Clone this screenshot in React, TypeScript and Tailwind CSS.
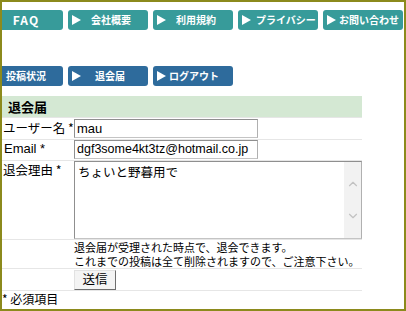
import React from "react";
import { ChevronUp, ChevronDown } from "lucide-react";

interface NavItem {
  label: string;
  arrow: boolean;
  gap: string;
}

const topNav: NavItem[] = [
  { label: "FAQ", arrow: false, gap: "" },
  { label: "会社概要", arrow: true, gap: "ml-[10px]" },
  { label: "利用規約", arrow: true, gap: "ml-[10px]" },
  { label: "プライバシー", arrow: true, gap: "ml-[5px]" },
  { label: "お問い合わせ", arrow: true, gap: "ml-[3px]" },
];

const userNav: NavItem[] = [
  { label: "投稿状況", arrow: false, gap: "" },
  { label: "退会届", arrow: true, gap: "ml-[14px]" },
  { label: "ログアウト", arrow: true, gap: "ml-[3px]" },
];

const Triangle = () => (
  <svg width="9" height="10" viewBox="0 0 9 10" className="shrink-0">
    <polygon points="0,0 9,5 0,10" fill="white" />
  </svg>
);

const NavButton: React.FC<{ item: NavItem; color: string }> = ({ item, color }) => (
  <div
    className={`w-[80px] h-[20px] shrink-0 rounded-[3px] flex items-center whitespace-nowrap overflow-hidden text-white font-bold text-[10px] leading-none ${color} ${
      item.arrow ? "pl-[4px]" : "justify-center pl-[6px]"
    }`}
  >
    {item.arrow && <Triangle />}
    <span className={`${item.gap} ${item.label === "FAQ" ? "tracking-[1px] text-[12px]" : ""}`}>{item.label}</span>
  </div>
);

const inputBox = "border border-[#8f8f8f] border-b-[#c4c4c4] border-r-[#b0b0b0]";

const App: React.FC = () => {
  const jp = "font-['Noto_Sans_CJK_JP',sans-serif]";
  return (
    <div className={`w-[406px] h-[311px] border-2 border-[#8c8a1c] bg-white overflow-hidden text-black ${jp}`}>
      <div className="flex gap-[5px] ml-[-19px] mt-[8px]">
        {topNav.map((n) => (
          <NavButton key={n.label} item={n} color="bg-[#379b9a]" />
        ))}
      </div>
      <div className="flex gap-[5px] ml-[-19px] mt-[36px]">
        {userNav.map((n) => (
          <NavButton key={n.label} item={n} color="bg-[#2e6b9c]" />
        ))}
      </div>

      <table className="mt-[10px] w-[360px] table-fixed border-collapse text-[12px] leading-none">
        <colgroup>
          <col className="w-[72px]" />
          <col className="w-[288px]" />
        </colgroup>
        <tbody>
          <tr>
            <td colSpan={2} className="h-[21px] bg-[#d4e8d3] pl-[6px] font-bold text-[13px] border-b border-[#e6e6e6]">
              退会届
            </td>
          </tr>
          <tr className="border-b border-[#e6e6e6]">
            <td className="h-[22px] pl-[1px] text-[12.5px] whitespace-nowrap">ユーザー名 *</td>
            <td>
              <div className={`w-[184px] h-[19px] ${inputBox} flex items-center pl-[2px] font-['Liberation_Sans',sans-serif] text-[13px]`}>
                mau
              </div>
            </td>
          </tr>
          <tr className="border-b border-[#e6e6e6]">
            <td className="h-[21px] pl-[2px] align-top pt-[2px] font-['Liberation_Sans',sans-serif] text-[13px] whitespace-nowrap">
              Email *
            </td>
            <td>
              <div className={`w-[184px] h-[19px] ${inputBox} flex items-center pl-[2px] font-['Liberation_Sans',sans-serif] text-[12.5px]`}>
                dgf3some4kt3tz@hotmail.co.jp
              </div>
            </td>
          </tr>
          <tr className="border-b border-[#e6e6e6]">
            <td className="h-[79px] pl-[1px] align-top pt-[3px] text-[12.5px] whitespace-nowrap">退会理由 *</td>
            <td className="align-top">
              <div className={`w-[288px] h-[78px] ${inputBox} flex`}>
                <div className="flex-1 pl-[3px] pt-[4px] text-[12.5px]">ちょいと野暮用で</div>
                <div className="w-[17px] bg-[#f2f2f2] flex flex-col items-center justify-center gap-[18px] text-[#c2c2c2]">
                  <ChevronUp size={14} strokeWidth={2} />
                  <ChevronDown size={14} strokeWidth={2} />
                </div>
              </div>
            </td>
          </tr>
          <tr className="border-b border-[#e6e6e6]">
            <td className="h-[26px]"></td>
            <td className="text-[11px] leading-[14px] whitespace-nowrap align-top">
              <div>退会届が受理された時点で、退会できます。</div>
              <div>これまでの投稿は全て削除されますので、ご注意下さい。</div>
            </td>
          </tr>
          <tr className="border-b border-[#e6e6e6]">
            <td className="h-[22px]"></td>
            <td className="align-top pt-[1px]">
              <div className="w-[42px] h-[20px] bg-[#f4f4f4] border border-[#e2e2e2] border-b-[#6e6e6e] border-r-[#6e6e6e] flex items-center justify-center text-[12.5px]">
                送信
              </div>
            </td>
          </tr>
        </tbody>
      </table>
      <div className="mt-[2px] text-[12px] leading-none">* 必須項目</div>
    </div>
  );
};

export default App;
